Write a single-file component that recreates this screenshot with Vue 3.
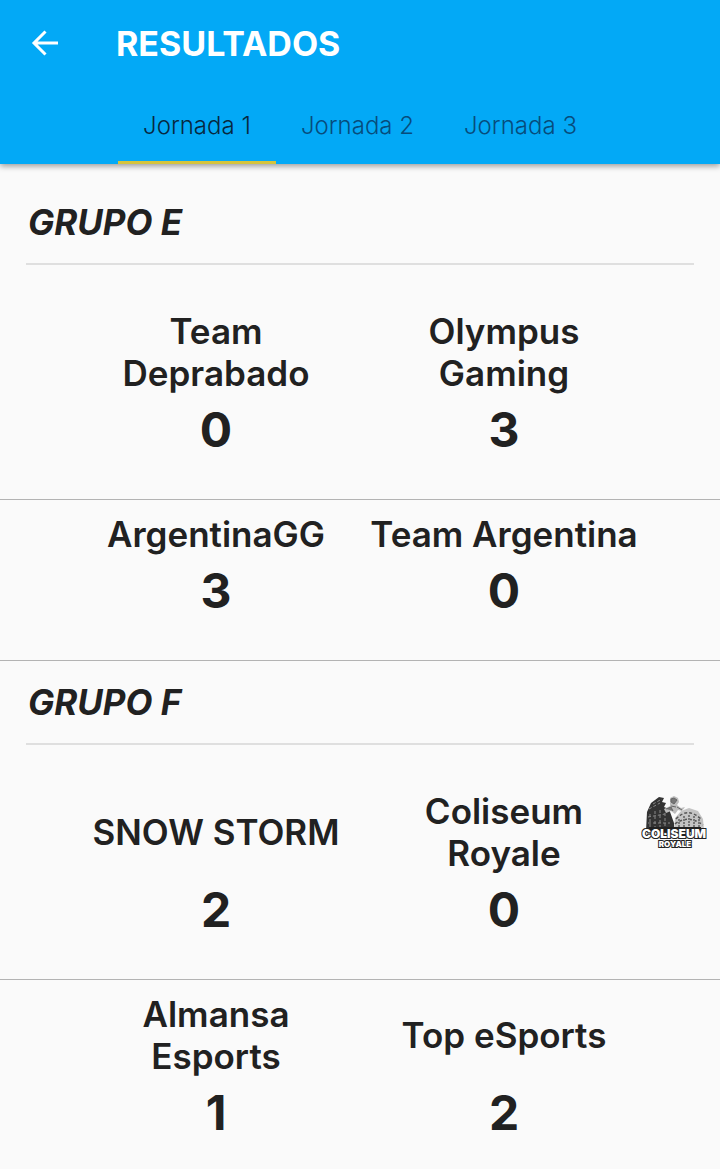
<script setup>
import { ref } from 'vue'

const tabs = ['Jornada 1', 'Jornada 2', 'Jornada 3']
const active = ref(0)

const groups = [
  {
    name: 'GRUPO E',
    matches: [
      { home: 'Team Deprabado', away: 'Olympus Gaming', score: [0, 3] },
      { home: 'ArgentinaGG', away: 'Team Argentina', score: [3, 0] },
    ],
  },
  {
    name: 'GRUPO F',
    matches: [
      { home: 'SNOW STORM', away: 'Coliseum Royale', score: [2, 0], logo: true },
      { home: 'Almansa Esports', away: 'Top eSports', score: [1, 2] },
    ],
  },
]
</script>

<template>
  <div class="screen">
    <header class="appbar">
      <div class="toolbar">
        <button class="back" type="button" aria-label="Volver">
          <svg viewBox="0 0 28 28" width="28" height="28" fill="none" stroke="currentColor" stroke-width="3">
            <path d="M27 14H3M14.500 2.500L3 14l11.500 11.500" />
          </svg>
        </button>
        <h1>RESULTADOS</h1>
      </div>
      <nav class="tabs" role="tablist">
        <button
          v-for="(tab, i) in tabs"
          :key="tab"
          type="button"
          role="tab"
          class="tab"
          :class="{ active: active === i }"
          :aria-selected="active === i"
          @click="active = i"
        >{{ tab }}</button>
      </nav>
    </header>

    <main class="results">
      <section v-for="group in groups" :key="group.name">
        <h2>{{ group.name }}</h2>
        <article v-for="match in group.matches" :key="match.home" class="match">
          <div class="name home">{{ match.home }}</div>
          <div class="name">{{ match.away }}</div>
          <div v-if="match.logo" class="logo">
            <svg viewBox="0 0 66 56" width="66" height="56" role="img" aria-label="Coliseum Royale">
              <path d="M5 36L6 17l4-9 8-6 5 1-2 4 4 1-2 4 5 2 5 14v11z" fill="#333" />
              <path d="M9 19v14M14 16v17M19 15v18M24 18v15M8 14l11-6M7 22l17-3M7 28h22M12 9l9-5" stroke="#888" stroke-width="1" stroke-dasharray="3 2" fill="none" />
              <path d="M33 35l1-12 6-7 8-3 9 3 5 8 1 11z" fill="#c4c4c4" />
              <path d="M35 24q12-13 26 1M34 29q13-10 28 1" stroke="#555" stroke-width="1.500" stroke-dasharray="3 2" fill="none" />
              <path d="M38 24v10M43 21v12M48 20v12M53 21v12M58 24v11" stroke="#777" stroke-width="2" stroke-dasharray="2 1" />
              <path d="M29 3l4-2 4 2 1 4-2 3 4 3 4-1-3 4-4-1-3 4-4-3-5 2-2-4 6-3z" fill="#bdbdbd" />
              <path d="M30 4l3-1 3 2-3 4-3-2zM25 14l5-2 2 4M36 12l5 3M30 11l5 1" fill="#777" stroke="#666" />
              <path d="M8 32h52v5H8z" fill="#222" />
              <text x="33" y="43" class="logo-main">COLISEUM</text>
              <text x="34" y="52" class="logo-sub">ROYALE</text>
            </svg>
          </div>
          <div class="score home">{{ match.score[0] }}</div>
          <div class="score">{{ match.score[1] }}</div>
        </article>
      </section>
    </main>
  </div>
</template>

<style>
body {
  background: #fafafa;
}
</style>

<style scoped>
.screen {
  display: flex;
  flex-direction: column;
  height: 100vh;
  color: #212121;
  background: #fafafa;
  font-family: Inter, "Noto Sans", sans-serif;
}

.appbar {
  flex: none;
  z-index: 1;
  background: #03a9f6;
  box-shadow: 0 2px 6px rgba(0, 0, 0, 0.4);
}

.toolbar {
  display: flex;
  align-items: center;
  height: 86px;
}

.back {
  width: 56px;
  height: 56px;
  margin: 0 43px 0 17px;
  padding: 0;
  display: grid;
  place-items: center;
  border: 0;
  background: none;
  color: #fff;
}

h1 {
  margin: 0;
  padding-top: 2px;
  font-size: 34px;
  line-height: 42px;
  font-weight: 700;
  color: #fff;
}

.tabs {
  display: flex;
  justify-content: center;
}

.tab {
  box-sizing: border-box;
  padding: 3px 25px 0;
  height: 78px;
  border: 0;
  border-bottom: 3px solid transparent;
  background: none;
  font-family: inherit;
  font-size: 24px;
  font-weight: 300;
  color: #074c7c;
}

.tab.active {
  border-bottom-color: #d6c43c;
  color: #08283f;
}

.results {
  flex: 1;
  min-height: 0;
  padding-top: 17px;
  overflow-y: auto;
  scrollbar-width: none;
}

h2 {
  margin: 0 26px 32px;
  padding: 20px 2px;
  border-bottom: 2px solid #dfdfdf;
  font-size: 35px;
  line-height: 42px;
  font-weight: 700;
  font-style: italic;
}

.match {
  display: grid;
  grid-template-columns: 72px 1fr 1fr 72px;
  row-gap: 1px;
  padding: 13px 0 34px;
  border-bottom: 1px solid #b3b3b3;
}

.name {
  display: flex;
  align-items: center;
  justify-content: center;
  padding: 0 10px;
  font-size: 35px;
  line-height: 42px;
  font-weight: 600;
  text-align: center;
}

.home {
  grid-column: 2;
}

.logo {
  display: flex;
  align-items: center;
  justify-content: flex-end;
  padding: 0 13px 18px 0;
}

.logo svg {
  flex: none;
}

.score {
  font-size: 48px;
  line-height: 70px;
  font-weight: 700;
  text-align: center;
}

.logo-main,
.logo-sub {
  font-family: Inter, sans-serif;
  font-weight: 900;
  text-anchor: middle;
  fill: #fff;
  stroke: #222;
  stroke-width: 2px;
  paint-order: stroke;
}

.logo-main {
  font-size: 12px;
}

.logo-sub {
  font-size: 8px;
}
</style>
